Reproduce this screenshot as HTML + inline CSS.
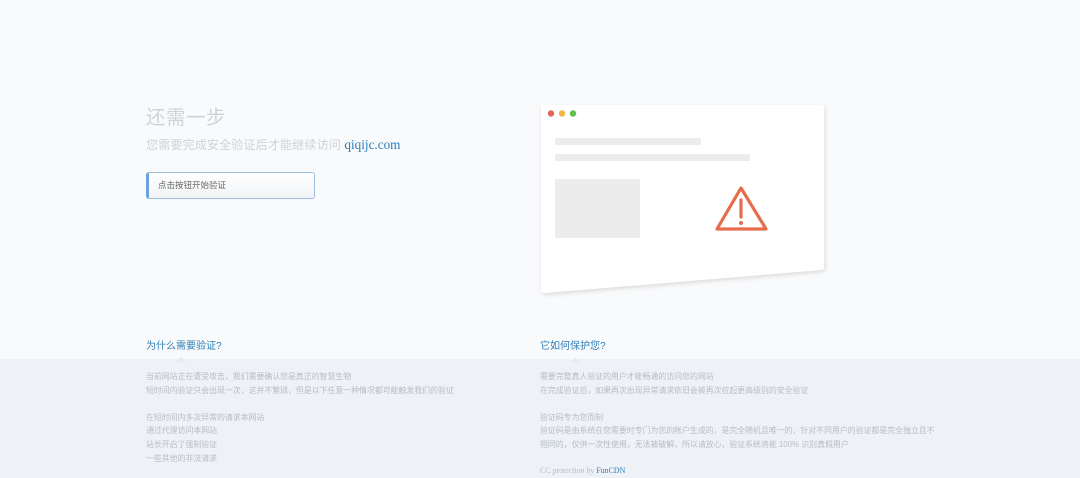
<!DOCTYPE html>
<html><head><meta charset="utf-8"><style>
*{margin:0;padding:0;box-sizing:border-box}
body{width:1080px;height:478px;overflow:hidden;background:#f9fafb;font-family:"Liberation Sans","Noto Sans CJK SC",sans-serif;position:relative}
.bot{position:absolute;left:0;top:359px;width:1080px;height:119px;background:#eef2f6}
.a{position:absolute}
h1{position:absolute;left:146px;top:101px;font-size:19.5px;font-weight:normal;color:#d0d3d6;letter-spacing:0.5px}
.sub{position:absolute;left:146px;top:135px;font-size:12.2px;color:#cfd2d5;white-space:nowrap}
.sub b{font-family:"Liberation Serif",serif;font-weight:normal;color:#2a7dbd;font-size:13.2px}
.btn{position:absolute;left:146px;top:172px;width:169px;height:27px;border:1px solid #9ebfe0;border-left:3px solid #6aa3e0;border-radius:3px;background:linear-gradient(#fff,#f1f3f5);font-size:8.5px;color:#666;padding:6px 0 0 9px}
.st{position:absolute;top:337px;font-size:10px;color:#2e7fb8}
.st:after{content:"";position:absolute;left:30px;top:15px;border:5px solid transparent;border-bottom-color:#e3ebf3}
.t{position:absolute;font-size:7.9px;color:#b7bcc1;line-height:13.6px;white-space:nowrap}
</style></head><body>
<div class="bot"></div>
<h1>还需一步</h1>
<div class="sub">您需要完成安全验证后才能继续访问 <b>qiqijc.com</b></div>
<div class="btn">点击按钮开始验证</div>
<svg class="a" style="left:530px;top:95px" width="310" height="210">
<defs><filter id="s" x="-10%" y="-10%" width="120%" height="120%"><feDropShadow dx="1" dy="2" stdDeviation="2" flood-color="#000" flood-opacity="0.12"/></filter></defs>
<path d="M11 10 H291 Q294 10 294 13 V172 Q294 175 291 175 L14 198 Q11 198 11 195 Z" fill="#fff" filter="url(#s)"/>
<circle cx="21" cy="18.5" r="3.2" fill="#e4645a"/><circle cx="32" cy="18.5" r="3.2" fill="#f0b841"/><circle cx="43" cy="18.5" r="3.2" fill="#5cbf4f"/>
<rect x="25" y="43" width="146" height="7" fill="#ececec"/>
<rect x="25" y="59" width="195" height="7" fill="#ececec"/>
<rect x="25" y="84" width="85" height="59" fill="#ececec"/>
<path d="M211 93 L236 134 H187 Z" fill="none" stroke="#e76c4b" stroke-width="3.2" stroke-linejoin="round"/>
<line x1="211" y1="105" x2="211" y2="122" stroke="#e76c4b" stroke-width="3.2" stroke-linecap="round"/>
<circle cx="211" cy="128" r="2" fill="#e76c4b"/>
</svg>
<div class="st" style="left:146px">为什么需要验证?</div>
<div class="st" style="left:540px">它如何保护您?</div>
<div class="t" style="left:146px;top:370px">当前网站正在遭受攻击，我们需要确认您是真正的智慧生物<br>短时间内验证只会出现一次，这并不繁琐，但是以下任意一种情况都可能触发我们的验证<br><br>在短时间内多次异常的请求本网站<br>通过代理访问本网站<br>站长开启了强制验证<br>一些其他的非法请求</div>
<div class="t" style="left:540px;top:370px">需要完整真人验证的用户才能畅通的访问您的网站<br>在完成验证后，如果再次出现异常请求依旧会被再次拉起更高级别的安全验证<br><br>验证码专为您而制<br>验证码是由系统在您需要时专门为您的帐户生成的，是完全随机且唯一的，针对不同用户的验证都是完全独立且不<br>相同的，仅供一次性使用，无法被破解，所以请放心，验证系统将能 100% 识别真假用户</div>
<div class="t" style="left:540px;top:464px;font-family:'Liberation Serif',serif">CC protection by <span style="color:#2a7dbd">FunCDN</span></div>
</body></html>
